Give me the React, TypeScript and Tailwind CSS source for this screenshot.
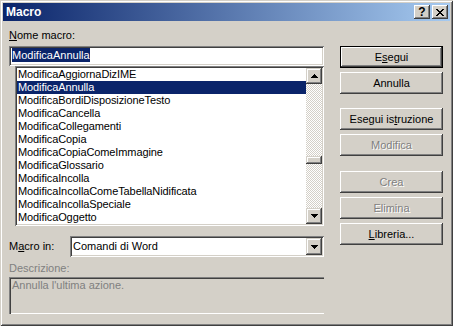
const items = [
  'ModificaAggiornaDizIME',
  'ModificaAnnulla',
  'ModificaBordiDisposizioneTesto',
  'ModificaCancella',
  'ModificaCollegamenti',
  'ModificaCopia',
  'ModificaCopiaComeImmagine',
  'ModificaGlossario',
  'ModificaIncolla',
  'ModificaIncollaComeTabellaNidificata',
  'ModificaIncollaSpeciale',
  'ModificaOggetto',
];

function Arrow({ down }: { down?: boolean }) {
  return (
    <svg width="7" height="4" viewBox="0 0 7 4" className="block">
      {down ? (
        <>
          <rect x="0" y="0" width="7" height="1" fill="#000" />
          <rect x="1" y="1" width="5" height="1" fill="#000" />
          <rect x="2" y="2" width="3" height="1" fill="#000" />
          <rect x="3" y="3" width="1" height="1" fill="#000" />
        </>
      ) : (
        <>
          <rect x="3" y="0" width="1" height="1" fill="#000" />
          <rect x="2" y="1" width="3" height="1" fill="#000" />
          <rect x="1" y="2" width="5" height="1" fill="#000" />
          <rect x="0" y="3" width="7" height="1" fill="#000" />
        </>
      )}
    </svg>
  );
}

function ScrollButton({ down, h = 'h-[16px]' }: { down?: boolean; h?: string }) {
  return (
    <div
      className={`${h} w-[16px] shrink-0 bg-[#d4d0c8] flex items-center justify-center shadow-[inset_-1px_-1px_#404040,inset_1px_1px_#d4d0c8,inset_-2px_-2px_#808080,inset_2px_2px_#fff]`}
    >
      <Arrow down={down} />
    </div>
  );
}

function Button({
  children,
  disabled,
  isDefault,
  className = '',
}: {
  children: React.ReactNode;
  disabled?: boolean;
  isDefault?: boolean;
  className?: string;
}) {
  return (
    <div
      className={`h-[22px] w-[103px] flex items-center justify-center bg-[#d4d0c8] ${
        isDefault
          ? 'border border-black shadow-[inset_-1px_-1px_#404040,inset_1px_1px_#fff,inset_-2px_-2px_#808080,inset_2px_2px_#d4d0c8]'
          : 'shadow-[inset_-1px_-1px_#404040,inset_1px_1px_#fff,inset_-2px_-2px_#808080,inset_2px_2px_#d4d0c8]'
      } ${disabled ? 'text-[#808080] [text-shadow:1px_1px_0_#fff]' : 'text-black'} ${className}`}
    >
      {children}
    </div>
  );
}

export default function App() {
  return (
    <div className="w-[453px] h-[326px] bg-[#d4d0c8] p-[3px] shadow-[inset_1px_1px_#d4d0c8,inset_-1px_-1px_#404040,inset_2px_2px_#fff,inset_-2px_-2px_#808080] font-['Liberation_Sans',Arial,sans-serif] text-[11px] leading-[13px] text-black select-none">
      {/* title bar */}
      <div className="h-[18px] flex items-center pl-[3px] pr-[2px] bg-[linear-gradient(to_right,#0a246a,#a6caf0)]">
        <span className="font-bold text-white text-[12px] leading-[14px]">Macro</span>
        <div className="ml-auto flex gap-[2px]">
          <div className="h-[14px] w-[16px] flex items-center justify-center bg-[#d4d0c8] font-bold text-[12px] leading-none shadow-[inset_-1px_-1px_#404040,inset_1px_1px_#fff,inset_-2px_-2px_#808080,inset_2px_2px_#d4d0c8]">
            ?
          </div>
          <div className="h-[14px] w-[16px] flex items-center justify-center bg-[#d4d0c8] shadow-[inset_-1px_-1px_#404040,inset_1px_1px_#fff,inset_-2px_-2px_#808080,inset_2px_2px_#d4d0c8]">
            <svg width="8" height="7" viewBox="0 0 8 7" className="block">
              <path
                d="M0 0h2v1H0zM6 0h2v1H6zM1 1h2v1H1zM5 1h2v1H5zM2 2h4v1H2zM3 3h2v1H3zM2 4h4v1H2zM1 5h2v1H1zM5 5h2v1H5zM0 6h2v1H0zM6 6h2v1H6z"
                fill="#000"
              />
            </svg>
          </div>
        </div>
      </div>

      <div className="flex">
        {/* left column */}
        <div className="ml-[6px] w-[315px] flex flex-col">
          <div className="mt-[8px] h-[13px]">
            <u>N</u>ome macro:
          </div>
          <div className="mt-[4px] h-[20px] bg-white pl-[3px] pt-[2px] shadow-[inset_1px_1px_#808080,inset_-1px_-1px_#fff,inset_2px_2px_#404040,inset_-2px_-2px_#d4d0c8]">
            <span className="inline-block bg-[#0a246a] text-white leading-[14px]">ModificaAnnulla</span>
          </div>

          {/* list box */}
          <div className="ml-[6px] h-[160px] p-[2px] flex bg-white shadow-[inset_1px_1px_#808080,inset_-1px_-1px_#fff,inset_2px_2px_#404040,inset_-2px_-2px_#d4d0c8]">
            <div className="flex-1 flex flex-col tracking-[-0.1px]">
              {items.map((it, i) => (
                <div
                  key={it}
                  className={`h-[13px] pl-[1px] whitespace-nowrap ${i === 1 ? 'bg-[#0a246a] text-white' : ''}`}
                >
                  {it}
                </div>
              ))}
            </div>
            <div className="w-[16px] flex flex-col">
              <ScrollButton />
              <div className="flex-1 flex flex-col bg-[conic-gradient(#fff_25%,#d4d0c8_0_50%,#fff_0_75%,#d4d0c8_0)] bg-[length:2px_2px]">
                <div className="h-[72px]" />
                <div className="h-[8px] w-[16px] bg-[#d4d0c8] shadow-[inset_-1px_-1px_#404040,inset_1px_1px_#d4d0c8,inset_-2px_-2px_#808080,inset_2px_2px_#fff]" />
              </div>
              <ScrollButton down />
            </div>
          </div>

          {/* macro in */}
          <div className="mt-[10px] h-[21px] flex items-center">
            <div className="w-[61px]">
              M<u>a</u>cro in:
            </div>
            <div className="h-[21px] w-[254px] p-[2px] flex bg-white shadow-[inset_1px_1px_#808080,inset_-1px_-1px_#fff,inset_2px_2px_#404040,inset_-2px_-2px_#d4d0c8]">
              <div className="flex-1 pl-[1px] flex items-center">Comandi di Word</div>
              <ScrollButton down h="h-[17px]" />
            </div>
          </div>

          <div className="mt-[5px] h-[13px] text-[#808080]">Descrizione:</div>
          <div className="mt-[2px] h-[37px] pl-[3px] pt-[2px] text-[#808080] shadow-[inset_1px_1px_#808080,inset_2px_2px_#404040,inset_0_-1px_#fff]">
            Annulla l'ultima azione.
          </div>
        </div>

        {/* right column */}
        <div className="ml-[16px] pt-[25px] flex flex-col">
          <Button isDefault>
            E<u>s</u>egui
          </Button>
          <Button className="mt-[4px]">Annulla</Button>
          <Button className="mt-[14px]">
            Esegui is<u>t</u>ruzione
          </Button>
          <Button className="mt-[4px]" disabled>
            Modifica
          </Button>
          <Button className="mt-[15px]" disabled>
            Crea
          </Button>
          <Button className="mt-[4px]" disabled>
            Elimina
          </Button>
          <Button className="mt-[4px]">
            <u>L</u>ibreria...
          </Button>
        </div>
      </div>
    </div>
  );
}
